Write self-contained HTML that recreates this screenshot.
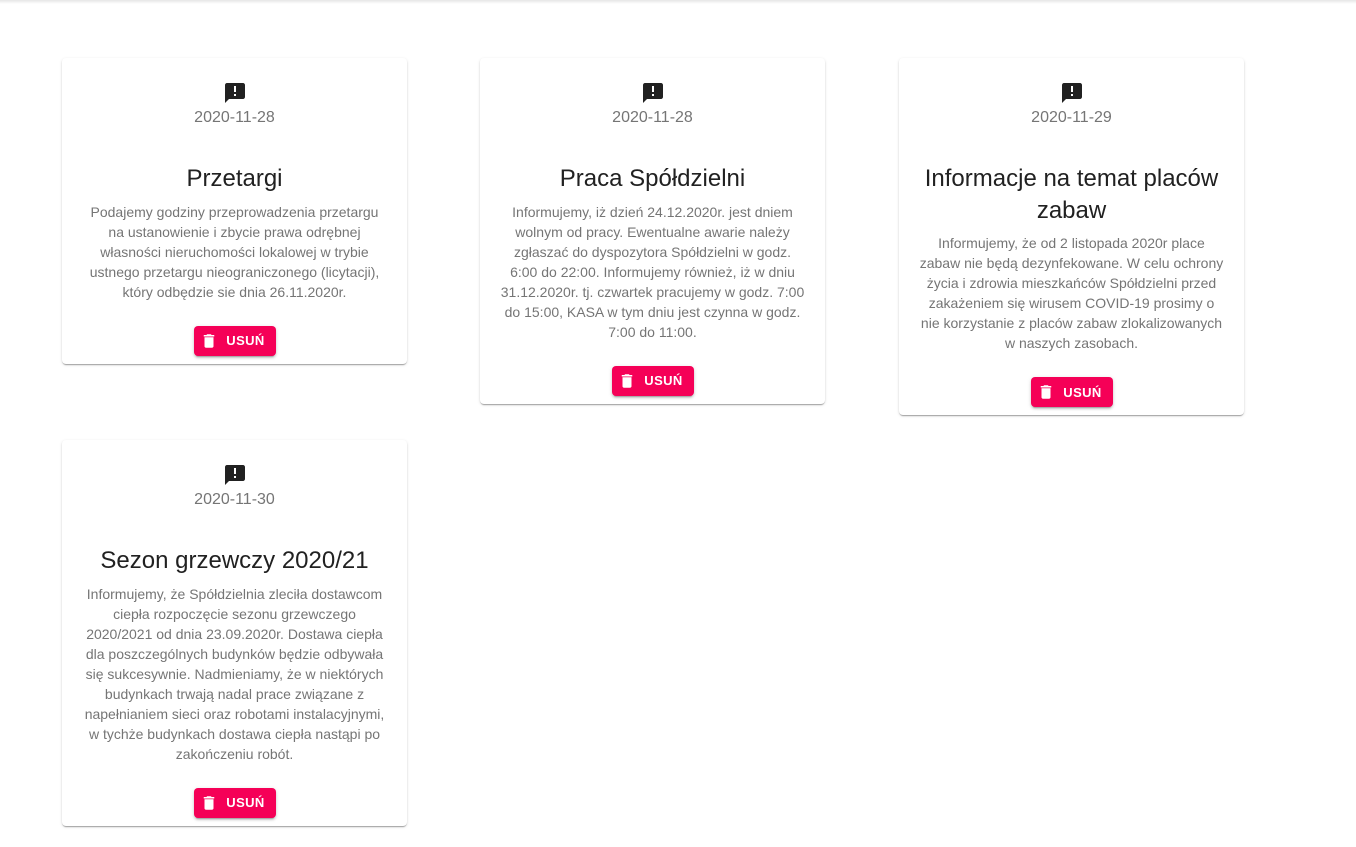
<!DOCTYPE html>
<html><head><meta charset="utf-8">
<style>
html,body{margin:0;padding:0;background:#fff;width:1356px;height:847px;overflow:hidden;font-family:"Liberation Sans",Arial,sans-serif}
.top{position:absolute;left:0;top:0;width:1356px;height:4px;background:linear-gradient(#e6e6e6,#fff)}
.card{position:absolute;width:345px;background:#fff;border-radius:4px;box-shadow:0 2px 1px -1px rgba(0,0,0,.2),0 1px 1px 0 rgba(0,0,0,.14),0 1px 3px 0 rgba(0,0,0,.12);text-align:center;box-sizing:border-box;padding:24px 10px 8px}
.ic{display:block;margin:0 auto;width:24px;height:24px;position:relative;top:-1px}
.date{font-size:16px;line-height:24px;color:#757575;margin-top:0}
h2{font-size:24px;font-weight:400;line-height:31.5px;color:#212121;margin:33px 0 7px;white-space:nowrap}
p{font-size:14px;line-height:20px;color:#757575;margin:0 0 24px;white-space:nowrap}
.btn{display:inline-flex;align-items:center;justify-content:center;width:82px;height:30px;background:#f50057;color:#fff;border-radius:4px;font-size:13px;font-weight:700;letter-spacing:.4px;box-shadow:0 3px 1px -2px rgba(0,0,0,.2),0 2px 2px 0 rgba(0,0,0,.14),0 1px 5px 0 rgba(0,0,0,.12)}
.btn svg{width:18px;height:18px;margin-right:8px;margin-left:-4px}
</style></head><body>
<div class="top"></div>

<div class="card" style="left:62px;top:58px">
<svg class="ic" viewBox="0 0 24 24"><path fill="#212121" d="M20 2H4c-1.1 0-1.990.9-1.99 2L2 22l4-4h14c1.1 0 2-.9 2-2V4c0-1.1-.9-2-2-2zm-7 9h-2V5h2v6zm0 4h-2v-2h2v2z"/></svg>
<div class="date">2020-11-28</div>
<h2>Przetargi</h2>
<p>Podajemy godziny przeprowadzenia przetargu<br>na ustanowienie i zbycie prawa odrębnej<br>własności nieruchomości lokalowej w trybie<br>ustnego przetargu nieograniczonego (licytacji),<br>który odbędzie sie dnia 26.11.2020r.</p>
<span class="btn"><svg viewBox="0 0 24 24"><path fill="#fff" d="M6 19c0 1.1.9 2 2 2h8c1.1 0 2-.9 2-2V7H6v12zM19 4h-3.5l-1-1h-5l-1 1H5v2h14V4z"/></svg>USUŃ</span>
</div>

<div class="card" style="left:480px;top:58px">
<svg class="ic" viewBox="0 0 24 24"><path fill="#212121" d="M20 2H4c-1.1 0-1.99.9-1.99 2L2 22l4-4h14c1.1 0 2-.9 2-2V4c0-1.1-.9-2-2-2zm-7 9h-2V5h2v6zm0 4h-2v-2h2v2z"/></svg>
<div class="date">2020-11-28</div>
<h2>Praca Spółdzielni</h2>
<p>Informujemy, iż dzień 24.12.2020r. jest dniem<br>wolnym od pracy. Ewentualne awarie należy<br>zgłaszać do dyspozytora Spółdzielni w godz.<br>6:00 do 22:00. Informujemy również, iż w dniu<br>31.12.2020r. tj. czwartek pracujemy w godz. 7:00<br>do 15:00, KASA w tym dniu jest czynna w godz.<br>7:00 do 11:00.</p>
<span class="btn"><svg viewBox="0 0 24 24"><path fill="#fff" d="M6 19c0 1.1.9 2 2 2h8c1.1 0 2-.9 2-2V7H6v12zM19 4h-3.5l-1-1h-5l-1 1H5v2h14V4z"/></svg>USUŃ</span>
</div>

<div class="card" style="left:899px;top:58px">
<svg class="ic" viewBox="0 0 24 24"><path fill="#212121" d="M20 2H4c-1.1 0-1.99.9-1.99 2L2 22l4-4h14c1.1 0 2-.9 2-2V4c0-1.1-.9-2-2-2zm-7 9h-2V5h2v6zm0 4h-2v-2h2v2z"/></svg>
<div class="date">2020-11-29</div>
<h2>Informacje na temat placów<br>zabaw</h2>
<p>Informujemy, że od 2 listopada 2020r place<br>zabaw nie będą dezynfekowane. W celu ochrony<br>życia i zdrowia mieszkańców Spółdzielni przed<br>zakażeniem się wirusem COVID-19 prosimy o<br>nie korzystanie z placów zabaw zlokalizowanych<br>w naszych zasobach.</p>
<span class="btn"><svg viewBox="0 0 24 24"><path fill="#fff" d="M6 19c0 1.1.9 2 2 2h8c1.1 0 2-.9 2-2V7H6v12zM19 4h-3.5l-1-1h-5l-1 1H5v2h14V4z"/></svg>USUŃ</span>
</div>

<div class="card" style="left:62px;top:440px">
<svg class="ic" viewBox="0 0 24 24"><path fill="#212121" d="M20 2H4c-1.1 0-1.99.9-1.99 2L2 22l4-4h14c1.1 0 2-.9 2-2V4c0-1.1-.9-2-2-2zm-7 9h-2V5h2v6zm0 4h-2v-2h2v2z"/></svg>
<div class="date">2020-11-30</div>
<h2>Sezon grzewczy 2020/21</h2>
<p>Informujemy, że Spółdzielnia zleciła dostawcom<br>ciepła rozpoczęcie sezonu grzewczego<br>2020/2021 od dnia 23.09.2020r. Dostawa ciepła<br>dla poszczególnych budynków będzie odbywała<br>się sukcesywnie. Nadmieniamy, że w niektórych<br>budynkach trwają nadal prace związane z<br>napełnianiem sieci oraz robotami instalacyjnymi,<br>w tychże budynkach dostawa ciepła nastąpi po<br>zakończeniu robót.</p>
<span class="btn"><svg viewBox="0 0 24 24"><path fill="#fff" d="M6 19c0 1.1.9 2 2 2h8c1.1 0 2-.9 2-2V7H6v12zM19 4h-3.5l-1-1h-5l-1 1H5v2h14V4z"/></svg>USUŃ</span>
</div>
</body></html>
